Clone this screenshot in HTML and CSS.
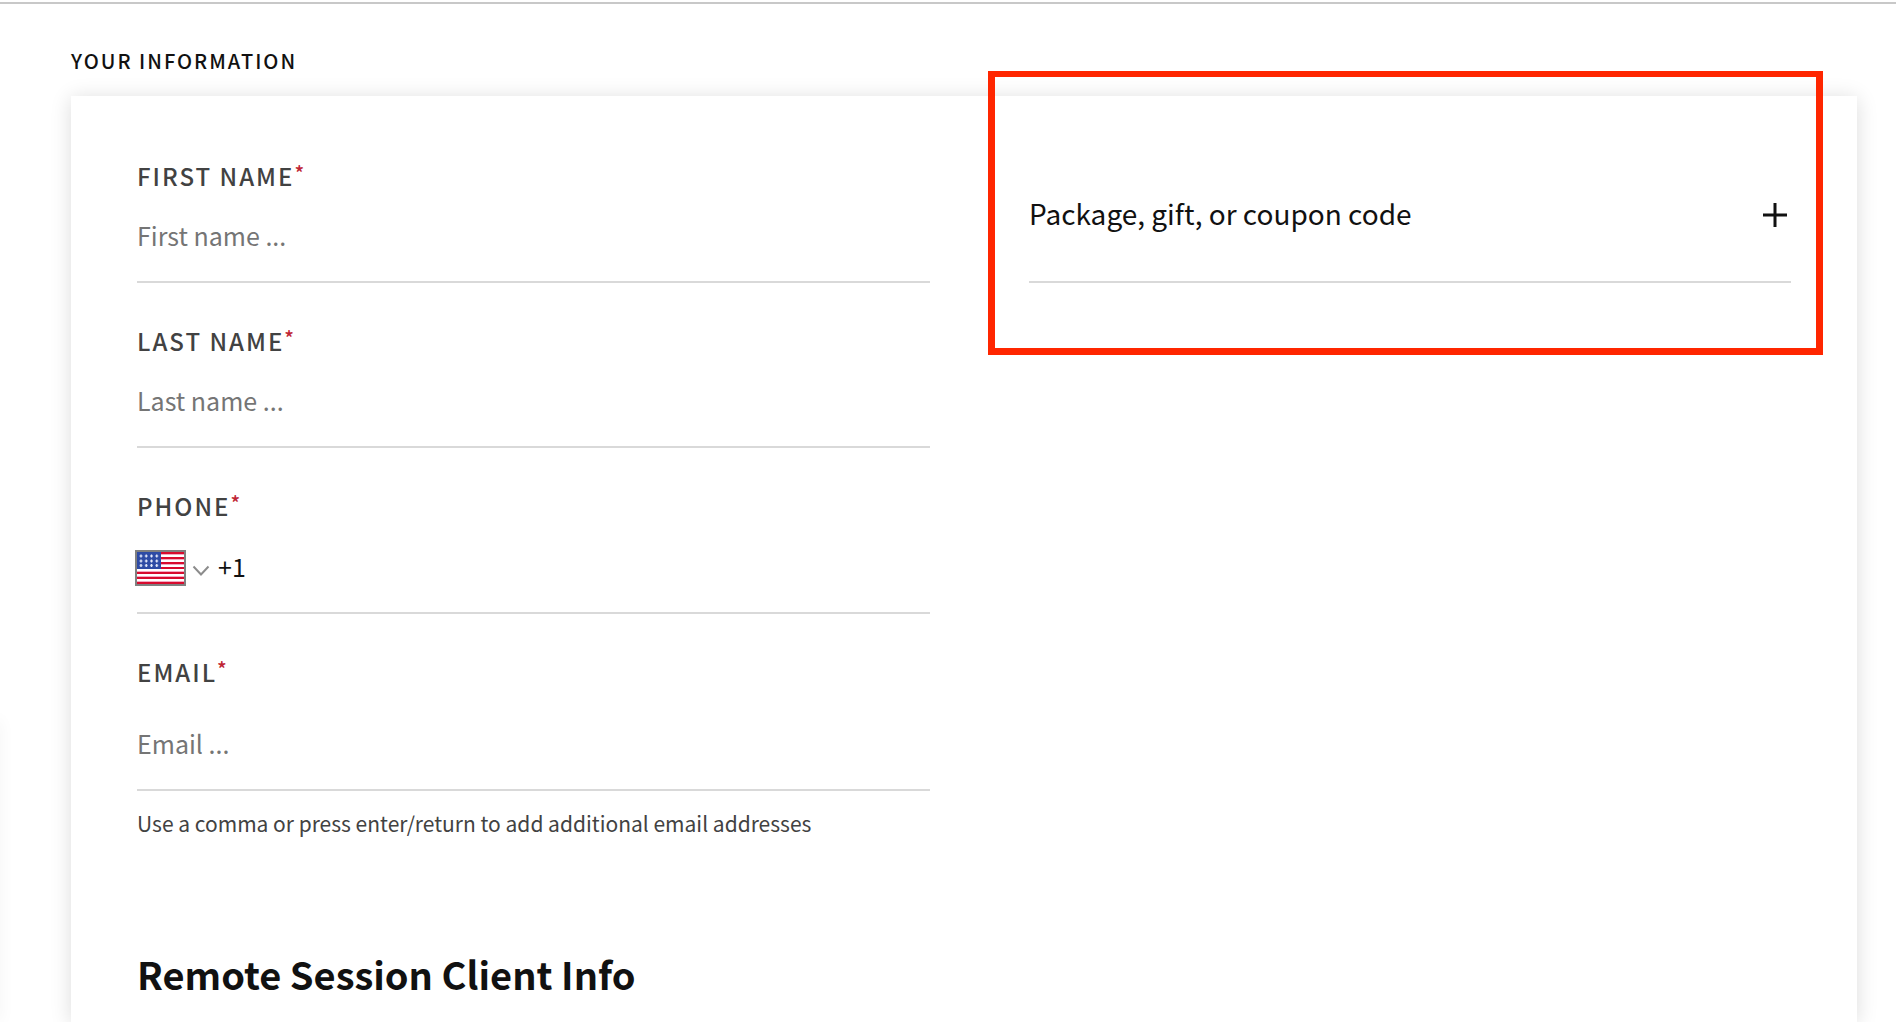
FILE: index.html
```html
<!DOCTYPE html>
<html lang="en">
<head>
<meta charset="utf-8">
<meta name="viewport" content="width=device-width, initial-scale=1">
<title>Your Information</title>
<link rel="stylesheet" href="styles.css">
</head>
<body>
<main class="page">
  <h2 class="section-title">Your Information</h2>
  <form class="card">
    <div class="fields">
      <div class="field">
        <label class="label" for="first-name">First Name<span class="required">*</span></label>
        <input class="input" id="first-name" type="text" placeholder="First name ...">
      </div>
      <div class="field">
        <label class="label" for="last-name">Last Name<span class="required">*</span></label>
        <input class="input" id="last-name" type="text" placeholder="Last name ...">
      </div>
      <div class="field">
        <label class="label" for="phone">Phone<span class="required">*</span></label>
        <div class="phone">
          <button class="country" type="button" aria-label="Country" aria-haspopup="listbox">
            <svg class="flag" viewBox="0 0 51 36" aria-hidden="true">
              <rect width="51" height="36" fill="#808080"/>
              <rect x="2" y="2" width="47" height="32" fill="#fff"/>
              <path d="M2 3h47M2 8h47M2 13h47M2 18h47M2 23h47M2 28h47M2 33h47" stroke="#d80b2e" stroke-width="2"/>
              <path d="M2 4.500h47M2 9.500h47M2 14.500h47M2 21.500h47M2 26.500h47M2 31.500h47" stroke="#f3a9c0" stroke-width="1"/>
              <rect x="2" y="2" width="24" height="17" fill="#2e4ba5"/>
              <path d="M4.500 6h3M9.750 6h3M15 6h3M20.250 6h3M4.500 11h3M9.750 11h3M15 11h3M20.250 11h3M4.500 15.500h3M9.750 15.500h3M15 15.500h3M20.250 15.500h3" stroke="#a9b7e0" stroke-width="1.500"/>
              <path d="M6 4.500v3M11.250 4.500v3M16.500 4.500v3M21.750 4.500v3M6 9.500v3M11.250 9.500v3M16.500 9.500v3M21.750 9.500v3M6 14v3M11.250 14v3M16.500 14v3M21.750 14v3" stroke="#e6ebfa" stroke-width="1.300"/>
            </svg>
            <svg class="chevron" viewBox="0 0 18 12" aria-hidden="true">
              <path d="M1.500 1.500 9 9.500l7.500-8" fill="none" stroke="#8c8c8c" stroke-width="2"/>
            </svg>
          </button>
          <input class="phone-input" id="phone" type="tel" value="+1">
        </div>
      </div>
      <div class="field">
        <label class="label" for="email">Email<span class="required">*</span></label>
        <input class="input input-tall" id="email" type="text" placeholder="Email ..." aria-describedby="email-help">
        <p class="help" id="email-help">Use a comma or press enter/return to add additional email addresses</p>
      </div>
      <h1 class="form-title">Remote Session Client Info</h1>
    </div>
    <div class="extras">
      <button class="coupon" type="button" aria-expanded="false">
        <span class="coupon-label">Package, gift, or coupon code</span>
        <svg class="plus" viewBox="0 0 24 24" aria-hidden="true">
          <path d="M0 12h24M12 0v24" stroke="#111" stroke-width="3"/>
        </svg>
      </button>
      <div class="highlight"></div>
    </div>
  </form>
</main>
</body>
</html>
```
FILE: styles.css
```css
* {
  box-sizing: border-box;
}

body {
  margin: 0;
  background: #fff;
  color: #111;
  font-family: "Noto Sans CJK SC", "Open Sans", sans-serif;
}

.page {
  position: relative;
  display: flex;
  flex-direction: column;
  min-height: 100vh;
  padding: 0 39px 0 71px;
  overflow: hidden;
}

/* Rule under the page header */
.page::before {
  content: "";
  height: 2px;
  margin: 2px -39px 0 -71px;
  background: #c8c8c8;
}

/* Shadow of the panel beyond the left edge */
.page::after {
  content: "";
  position: absolute;
  top: 720px;
  bottom: 0;
  left: -10px;
  width: 10px;
  box-shadow: 0 0 16px rgba(0, 0, 0, 0.05);
}

.section-title {
  margin: 40px 0 18px;
  font-size: 20px;
  font-weight: 500;
  line-height: 34px;
  letter-spacing: 2px;
  text-transform: uppercase;
}

.card {
  display: grid;
  flex: 1;
  grid-template-columns: 51fr 49fr;
  gap: 99px;
  padding: 62px 66px 0;
  background: #fff;
  box-shadow: 0 2px 20px rgba(0, 0, 0, 0.14);
}

.fields {
  display: flex;
  flex-direction: column;
  gap: 40px;
}

.label {
  display: flex;
  font-size: 24px;
  font-weight: 500;
  line-height: 36px;
  letter-spacing: 2px;
  color: #424242;
  text-transform: uppercase;
}

.required {
  font-size: 20px;
  line-height: 30px;
  letter-spacing: 0;
  color: #bf2535;
}

.input,
.phone {
  width: 100%;
  height: 89px;
  border: 0;
  border-bottom: 2px solid #d9d9d9;
}

.input,
.phone-input {
  padding: 0 0 5px;
  background: none;
  font: inherit;
  font-size: 25px;
  color: #111;
  outline: none;
}

.input::placeholder {
  color: #757575;
  opacity: 1;
}

.input-tall {
  height: 101px;
  padding-top: 12px;
}

.phone {
  display: flex;
  align-items: center;
  gap: 8px;
  height: 90px;
}

.country {
  display: flex;
  align-items: center;
  gap: 6px;
  margin-left: -2px;
  padding: 0;
  border: 0;
  background: none;
}

.flag {
  width: 51px;
  height: 36px;
}

.chevron {
  width: 18px;
  height: 12px;
  margin-top: 6px;
}

.phone-input {
  flex: 1;
  min-width: 0;
  border: 0;
}

.help {
  margin: 16px 0 0;
  font-size: 21px;
  line-height: 32px;
  color: #424242;
}

.form-title {
  margin: 65px 0 0;
  font-size: 38px;
  font-weight: 700;
  line-height: 60px;
}

.extras {
  position: relative;
}

.coupon {
  display: flex;
  align-items: center;
  justify-content: space-between;
  width: 100%;
  height: 125px;
  padding: 0 4px 10px 0;
  border: 0;
  border-bottom: 2px solid #d9d9d9;
  background: none;
  color: #111;
  font: inherit;
  font-size: 28px;
}

.coupon-label {
  padding-bottom: 4px;
}

.plus {
  width: 24px;
  height: 24px;
}

/* Callout frame around the coupon row */
.highlight {
  position: absolute;
  top: -87px;
  right: -32px;
  left: -41px;
  height: 284px;
  border: 7px solid #ff2600;
  border-top-width: 6px;
  pointer-events: none;
}
```
